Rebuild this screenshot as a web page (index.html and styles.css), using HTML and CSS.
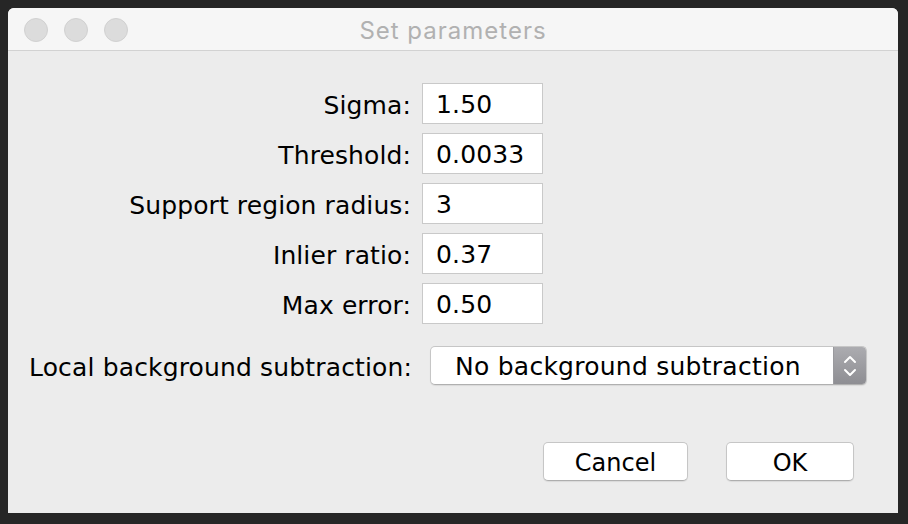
FILE: index.html
```html
<!DOCTYPE html>
<html>
<head>
<meta charset="utf-8">
<link rel="stylesheet" href="styles.css">
</head>
<body>
<div class="window">
  <div class="titlebar">
    <div class="lights">
      <span class="light"></span><span class="light"></span><span class="light"></span>
    </div>
    <div class="title">Set parameters</div>
  </div>
  <div class="content">
    <div class="params">
      <label class="label">Sigma:</label><div class="field">1.50</div>
      <label class="label">Threshold:</label><div class="field">0.0033</div>
      <label class="label">Support region radius:</label><div class="field">3</div>
      <label class="label">Inlier ratio:</label><div class="field">0.37</div>
      <label class="label">Max error:</label><div class="field">0.50</div>
    </div>
    <div class="select-row">
      <label class="label wide">Local background subtraction:</label>
      <div class="select">
        <span class="select-text">No background subtraction</span>
        <span class="stepper">
          <svg width="14" height="26" viewBox="0 0 14 26">
            <path d="M2 9 L7 4 L12 9" fill="none" stroke="#fff" stroke-width="2" stroke-linecap="round" stroke-linejoin="round"/>
            <path d="M2 17 L7 22 L12 17" fill="none" stroke="#fff" stroke-width="2" stroke-linecap="round" stroke-linejoin="round"/>
          </svg>
        </span>
      </div>
    </div>
    <div class="buttons">
      <button class="btn cancel">Cancel</button>
      <button class="btn ok">OK</button>
    </div>
  </div>
</div>
</body>
</html>
```
FILE: styles.css
```css
html, body {
  margin: 0;
  padding: 0;
}
body {
  background: #262626;
  padding: 8px 10px 11px 8px;
  font-family: "DejaVu Sans", sans-serif;
  color: #000;
}
.window {
  width: 890px;
  height: 505px;
  background: #ececec;
  border-radius: 6px 6px 0 0;
  overflow: hidden;
  display: flex;
  flex-direction: column;
}
.titlebar {
  height: 42px;
  background: #f6f6f6;
  border-bottom: 1px solid #d2d2d2;
  position: relative;
  display: flex;
  align-items: center;
  justify-content: center;
}
.lights {
  position: absolute;
  left: 16px;
  top: 10px;
  display: flex;
  gap: 16px;
}
.light {
  width: 22px;
  height: 22px;
  border-radius: 50%;
  background: #dcdcdc;
  border: 1px solid #d1d1d1;
}
.title {
  font-family: "Inter", "Liberation Sans", sans-serif;
  font-size: 24px;
  letter-spacing: 1px;
  color: #b1b1b1;
  margin-top: 2px;
}
.content {
  flex: 1;
  display: flex;
  flex-direction: column;
}
.params {
  display: grid;
  grid-template-columns: 403px 121px;
  column-gap: 11px;
  row-gap: 9px;
  margin-top: 32px;
}
.label {
  font-size: 25px;
  letter-spacing: 0.1px;
  text-align: right;
  align-self: center;
  white-space: nowrap;
  padding-top: 3px;
}
.field {
  height: 39px;
  background: #fff;
  border: 1px solid #c9c9c9;
  font-size: 25px;
  letter-spacing: 0.15px;
  line-height: 41px;
  padding-left: 13px;
}
.select-row {
  display: flex;
  align-items: center;
  margin-top: 22px;
  padding-left: 21px;
}
.label.wide {
  width: 382px;
  text-align: left;
  letter-spacing: 0.15px;
}
.select {
  margin-left: 19px;
  width: 435px;
  height: 37px;
  background: #fff;
  border: 1px solid #c6c6c6;
  border-bottom-color: #b0b0b0;
  border-radius: 5px;
  display: flex;
  overflow: hidden;
  box-shadow: 0 1px 1px rgba(0,0,0,0.08);
}
.select-text {
  flex: 1;
  font-size: 25px;
  letter-spacing: 0.25px;
  line-height: 39px;
  padding-left: 24px;
}
.stepper {
  width: 32px;
  background: linear-gradient(#acacb0, #8e8e93);
  display: flex;
  align-items: center;
  justify-content: center;
  border-left: 1px solid #9a9a9e;
}
.buttons {
  display: flex;
  justify-content: flex-end;
  gap: 38px;
  margin-top: 57px;
  padding-right: 44px;
}
.btn {
  height: 39px;
  background: #fff;
  border: 1px solid #c6c6c6;
  border-bottom-color: #aeaeae;
  border-radius: 5px;
  font-family: "DejaVu Sans", sans-serif;
  font-size: 24px;
  color: #000;
  padding: 2px 0 0;
  box-shadow: 0 1px 1px rgba(0,0,0,0.08);
}
.cancel { width: 145px; }
.ok { width: 128px; }
```
